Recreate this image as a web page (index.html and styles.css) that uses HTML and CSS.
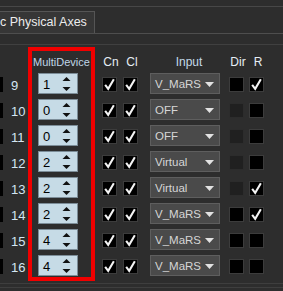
FILE: index.html
```html
<!DOCTYPE html>
<html lang="en">
<head>
  <meta charset="UTF-8">
  <title>Physical Axes</title>
  <link rel="stylesheet" href="styles.css">
</head>
<body>
  <div class="topline"></div>
  <div class="tabrow">
    <div class="tab">c Physical Axes</div>
  </div>
  <div class="sep"></div>

  <div class="panel">
    <!-- clipped column at the left edge -->
    <div class="col edge">
      <div class="head"></div>
      <div class="cell"><span class="stub"></span></div>
      <div class="cell"><span class="stub"></span></div>
      <div class="cell"><span class="stub"></span></div>
      <div class="cell"><span class="stub"></span></div>
      <div class="cell"><span class="stub"></span></div>
      <div class="cell"><span class="stub"></span></div>
      <div class="cell"><span class="stub"></span></div>
      <div class="cell"><span class="stub"></span></div>
    </div>

    <div class="col nums">
      <div class="head"></div>
      <div class="cell">9</div>
      <div class="cell">10</div>
      <div class="cell">11</div>
      <div class="cell">12</div>
      <div class="cell">13</div>
      <div class="cell">14</div>
      <div class="cell">15</div>
      <div class="cell">16</div>
    </div>

    <div class="col multi">
      <div class="head">MultiDevice</div>
      <div class="cell"><div class="spin"><span>1</span><svg class="arrows" width="9" height="14" viewBox="0 0 9 14"><path d="M4.5 0 L8.5 4 L0.5 4 Z M0.5 10 L8.5 10 L4.5 14 Z"/></svg></div></div>
      <div class="cell"><div class="spin"><span>0</span><svg class="arrows" width="9" height="14" viewBox="0 0 9 14"><path d="M4.5 0 L8.5 4 L0.5 4 Z M0.5 10 L8.5 10 L4.5 14 Z"/></svg></div></div>
      <div class="cell"><div class="spin"><span>0</span><svg class="arrows" width="9" height="14" viewBox="0 0 9 14"><path d="M4.5 0 L8.5 4 L0.5 4 Z M0.5 10 L8.5 10 L4.5 14 Z"/></svg></div></div>
      <div class="cell"><div class="spin"><span>2</span><svg class="arrows" width="9" height="14" viewBox="0 0 9 14"><path d="M4.5 0 L8.5 4 L0.5 4 Z M0.5 10 L8.5 10 L4.5 14 Z"/></svg></div></div>
      <div class="cell"><div class="spin"><span>2</span><svg class="arrows" width="9" height="14" viewBox="0 0 9 14"><path d="M4.5 0 L8.5 4 L0.5 4 Z M0.5 10 L8.5 10 L4.5 14 Z"/></svg></div></div>
      <div class="cell"><div class="spin"><span>2</span><svg class="arrows" width="9" height="14" viewBox="0 0 9 14"><path d="M4.5 0 L8.5 4 L0.5 4 Z M0.5 10 L8.5 10 L4.5 14 Z"/></svg></div></div>
      <div class="cell"><div class="spin"><span>4</span><svg class="arrows" width="9" height="14" viewBox="0 0 9 14"><path d="M4.5 0 L8.5 4 L0.5 4 Z M0.5 10 L8.5 10 L4.5 14 Z"/></svg></div></div>
      <div class="cell"><div class="spin"><span>4</span><svg class="arrows" width="9" height="14" viewBox="0 0 9 14"><path d="M4.5 0 L8.5 4 L0.5 4 Z M0.5 10 L8.5 10 L4.5 14 Z"/></svg></div></div>
    </div>

    <div class="col box cn">
      <div class="head">Cn</div>
      <div class="cell"><span class="chk on"><svg viewBox="0 0 15 15"><polyline points="2.5,8 6,12.5 12.5,1.5"/></svg></span></div>
      <div class="cell"><span class="chk on"><svg viewBox="0 0 15 15"><polyline points="2.5,8 6,12.5 12.5,1.5"/></svg></span></div>
      <div class="cell"><span class="chk on"><svg viewBox="0 0 15 15"><polyline points="2.5,8 6,12.5 12.5,1.5"/></svg></span></div>
      <div class="cell"><span class="chk on"><svg viewBox="0 0 15 15"><polyline points="2.5,8 6,12.5 12.5,1.5"/></svg></span></div>
      <div class="cell"><span class="chk on"><svg viewBox="0 0 15 15"><polyline points="2.5,8 6,12.5 12.5,1.5"/></svg></span></div>
      <div class="cell"><span class="chk on"><svg viewBox="0 0 15 15"><polyline points="2.5,8 6,12.5 12.5,1.5"/></svg></span></div>
      <div class="cell"><span class="chk on"><svg viewBox="0 0 15 15"><polyline points="2.5,8 6,12.5 12.5,1.5"/></svg></span></div>
      <div class="cell"><span class="chk on"><svg viewBox="0 0 15 15"><polyline points="2.5,8 6,12.5 12.5,1.5"/></svg></span></div>
    </div>

    <div class="col box cl">
      <div class="head">Cl</div>
      <div class="cell"><span class="chk on"><svg viewBox="0 0 15 15"><polyline points="2.5,8 6,12.5 12.5,1.5"/></svg></span></div>
      <div class="cell"><span class="chk on"><svg viewBox="0 0 15 15"><polyline points="2.5,8 6,12.5 12.5,1.5"/></svg></span></div>
      <div class="cell"><span class="chk on"><svg viewBox="0 0 15 15"><polyline points="2.5,8 6,12.5 12.5,1.5"/></svg></span></div>
      <div class="cell"><span class="chk on"><svg viewBox="0 0 15 15"><polyline points="2.5,8 6,12.5 12.5,1.5"/></svg></span></div>
      <div class="cell"><span class="chk on"><svg viewBox="0 0 15 15"><polyline points="2.5,8 6,12.5 12.5,1.5"/></svg></span></div>
      <div class="cell"><span class="chk on"><svg viewBox="0 0 15 15"><polyline points="2.5,8 6,12.5 12.5,1.5"/></svg></span></div>
      <div class="cell"><span class="chk on"><svg viewBox="0 0 15 15"><polyline points="2.5,8 6,12.5 12.5,1.5"/></svg></span></div>
      <div class="cell"><span class="chk on"><svg viewBox="0 0 15 15"><polyline points="2.5,8 6,12.5 12.5,1.5"/></svg></span></div>
    </div>

    <div class="col input">
      <div class="head">Input</div>
      <div class="cell"><div class="drop"><span>V_MaRS</span><svg width="9" height="5" viewBox="0 0 9 5"><path d="M0 0 L9 0 L4.5 5 Z"/></svg></div></div>
      <div class="cell"><div class="drop"><span>OFF</span><svg width="9" height="5" viewBox="0 0 9 5"><path d="M0 0 L9 0 L4.5 5 Z"/></svg></div></div>
      <div class="cell"><div class="drop"><span>OFF</span><svg width="9" height="5" viewBox="0 0 9 5"><path d="M0 0 L9 0 L4.5 5 Z"/></svg></div></div>
      <div class="cell"><div class="drop"><span>Virtual</span><svg width="9" height="5" viewBox="0 0 9 5"><path d="M0 0 L9 0 L4.5 5 Z"/></svg></div></div>
      <div class="cell"><div class="drop"><span>Virtual</span><svg width="9" height="5" viewBox="0 0 9 5"><path d="M0 0 L9 0 L4.5 5 Z"/></svg></div></div>
      <div class="cell"><div class="drop"><span>V_MaRS</span><svg width="9" height="5" viewBox="0 0 9 5"><path d="M0 0 L9 0 L4.5 5 Z"/></svg></div></div>
      <div class="cell"><div class="drop"><span>V_MaRS</span><svg width="9" height="5" viewBox="0 0 9 5"><path d="M0 0 L9 0 L4.5 5 Z"/></svg></div></div>
      <div class="cell"><div class="drop"><span>V_MaRS</span><svg width="9" height="5" viewBox="0 0 9 5"><path d="M0 0 L9 0 L4.5 5 Z"/></svg></div></div>
    </div>

    <div class="col box dir">
      <div class="head">Dir</div>
      <div class="cell"><span class="chk"></span></div>
      <div class="cell"><span class="chk off"></span></div>
      <div class="cell"><span class="chk off"></span></div>
      <div class="cell"><span class="chk off"></span></div>
      <div class="cell"><span class="chk off"></span></div>
      <div class="cell"><span class="chk"></span></div>
      <div class="cell"><span class="chk"></span></div>
      <div class="cell"><span class="chk"></span></div>
    </div>

    <div class="col box rev">
      <div class="head">R</div>
      <div class="cell"><span class="chk on"><svg viewBox="0 0 15 15"><polyline points="2.5,8 6,12.5 12.5,1.5"/></svg></span></div>
      <div class="cell"><span class="chk"></span></div>
      <div class="cell"><span class="chk"></span></div>
      <div class="cell"><span class="chk"></span></div>
      <div class="cell"><span class="chk on"><svg viewBox="0 0 15 15"><polyline points="2.5,8 6,12.5 12.5,1.5"/></svg></span></div>
      <div class="cell"><span class="chk on"><svg viewBox="0 0 15 15"><polyline points="2.5,8 6,12.5 12.5,1.5"/></svg></span></div>
      <div class="cell"><span class="chk"></span></div>
      <div class="cell"><span class="chk"></span></div>
    </div>
  </div>

  <div class="bottom"></div>
</body>
</html>
```

FILE: styles.css
```css
body {
  margin: 0;
  width: 283px;
  height: 291px;
  overflow: hidden;
  background: #2d2d2d;
  font-family: 'Liberation Sans', Arial, sans-serif;
  color: #d0e2ef;
}

.topline {
  height: 6px;
  border-bottom: 1px solid #474747;
}

.tabrow {
  margin-top: 4px;
  height: 22px;
  border-bottom: 1px solid #4e4e4e;
  display: flex;
}

.tab {
  height: 22px;
  padding-right: 7px;
  background: #363636;
  border-top: 1px solid #555555;
  border-right: 1px solid #555555;
  box-sizing: border-box;
  color: #ececec;
  font-size: 12.5px;
  line-height: 20px;
  white-space: nowrap;
}

.sep {
  height: 10px;
  border-bottom: 1px solid #404040;
}

.panel {
  display: flex;
  align-items: flex-start;
  padding-top: 2px;
}

.col {
  display: flex;
  flex-direction: column;
  gap: 5px;
  padding-top: 4px;
}

.head {
  height: 22px;
  line-height: 22px;
  font-size: 11px;
  color: #c4d8e8;
  display: flex;
  justify-content: center;
  white-space: nowrap;
  margin-bottom: -5px;
}

.cell {
  height: 21px;
  display: flex;
  align-items: center;
}

/* clipped checkboxes on the far left */
.edge {
  width: 3px;
}

.stub {
  width: 3px;
  height: 15px;
  background: #000;
  margin-top: 1px;
}

.nums {
  width: 18px;
  margin-left: 8px;
  margin-right: -1px;
}

.nums .cell {
  font-size: 13px;
  color: #d4e6f3;
  padding-top: 3px;
  box-sizing: border-box;
}

/* MultiDevice column, outlined in red */
.multi {
  width: 53px;
  border: 4px solid #f00000;
  padding: 0 0 1px 6px;
}

.multi .head {
  margin-left: -6px;
  color: #c0d6e8;
}

.spin {
  width: 40px;
  height: 21px;
  box-sizing: border-box;
  background: #c6dbe6;
  border: 1px solid #7c8d98;
  display: flex;
  align-items: center;
  justify-content: space-between;
  padding: 1px 6px 0 4px;
  font-size: 13px;
  color: #000;
}

.arrows {
  fill: #111;
  margin-top: -1px;
}

.box {
  width: 15px;
}

.box .head {
  padding-left: 3px;
  font-size: 12px;
  color: #e6eef4;
}

.cn {
  margin-left: 7px;
}

.cl {
  margin-left: 6px;
}

.dir {
  margin-left: 9px;
}

.rev {
  margin-left: 5px;
}

.chk {
  display: block;
  width: 15px;
  height: 15px;
  box-sizing: border-box;
  background: #000;
  border: 1px solid #3c3c3c;
  margin-top: 1px;
}

.chk.off {
  background: #202020;
  border-color: #2c2c2c;
}

.chk svg {
  display: block;
  width: 13px;
  height: 13px;
  fill: none;
  stroke: #f4f4f4;
  stroke-width: 2.4;
}

.input {
  width: 70px;
  margin-left: 12px;
}

.input .head {
  padding-left: 8px;
  font-size: 12px;
  color: #c4daea;
}

.drop {
  width: 70px;
  height: 21px;
  box-sizing: border-box;
  background: #4a4a4a;
  border: 1px solid #5e5e5e;
  display: flex;
  align-items: center;
  justify-content: space-between;
  padding: 0 5px 0 4px;
  font-size: 11.5px;
  color: #d6d6d6;
}

.drop svg {
  fill: #e2e2e2;
  margin-top: 2px;
}

.bottom {
  margin-top: 2px;
  height: 3px;
  border-top: 1px solid #3e3e3e;
  border-bottom: 1px solid #3e3e3e;
}
```
